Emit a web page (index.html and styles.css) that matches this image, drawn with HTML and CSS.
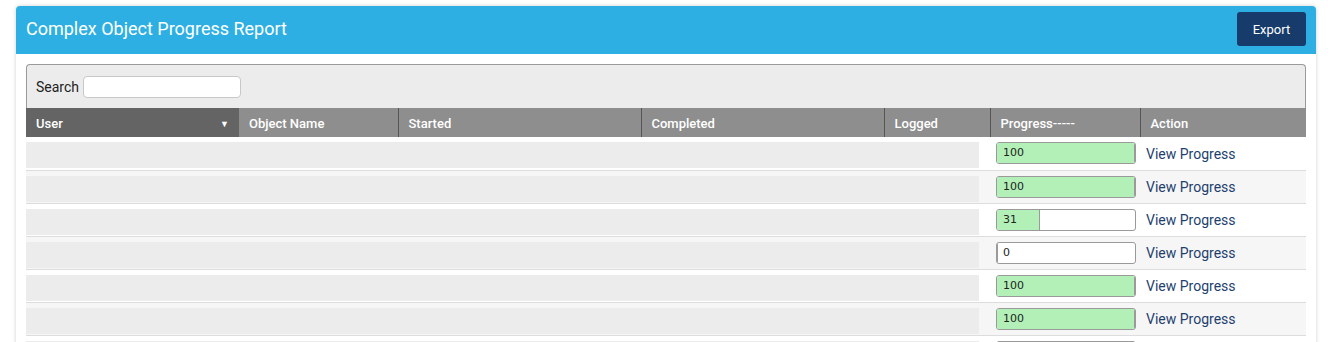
FILE: index.html
```html
<!DOCTYPE html>
<html lang="en">
<head>
<meta charset="utf-8">
<title>Complex Object Progress Report</title>
<link rel="stylesheet" href="styles.css">
</head>
<body>
<div class="panel">
  <div class="panel-head">
    <h1 class="panel-title">Complex Object Progress Report</h1>
    <button class="btn-export" type="button">Export</button>
  </div>
  <div class="panel-body">
    <div class="grid-wrap">
      <div class="toolbar">
        <label class="search-label">Search</label>
        <input class="search-input" type="text">
      </div>
      <table class="grid">
        <colgroup>
          <col class="c-user"><col class="c-obj"><col class="c-start"><col class="c-comp"><col class="c-log"><col class="c-prog"><col class="c-act">
        </colgroup>
        <thead>
          <tr>
            <th class="sorted"><span>User</span><span class="sort-arrow">&#9660;</span></th>
            <th>Object Name</th>
            <th>Started</th>
            <th>Completed</th>
            <th>Logged</th>
            <th>Progress-----</th>
            <th>Action</th>
          </tr>
        </thead>
        <tbody>
          <tr>
            <td colspan="5" class="skel-cell"><div class="skel"></div></td>
            <td class="prog-cell"><div class="bar"><div class="fill" style="width:100%"></div><span class="bar-label">100</span></div></td>
            <td class="act-cell"><a class="link" href="#">View Progress</a></td>
          </tr>
          <tr>
            <td colspan="5" class="skel-cell"><div class="skel"></div></td>
            <td class="prog-cell"><div class="bar"><div class="fill" style="width:100%"></div><span class="bar-label">100</span></div></td>
            <td class="act-cell"><a class="link" href="#">View Progress</a></td>
          </tr>
          <tr>
            <td colspan="5" class="skel-cell"><div class="skel"></div></td>
            <td class="prog-cell"><div class="bar"><div class="fill" style="width:31%"></div><span class="bar-label">31</span></div></td>
            <td class="act-cell"><a class="link" href="#">View Progress</a></td>
          </tr>
          <tr>
            <td colspan="5" class="skel-cell"><div class="skel"></div></td>
            <td class="prog-cell"><div class="bar"><div class="fill" style="width:0%"></div><span class="bar-label">0</span></div></td>
            <td class="act-cell"><a class="link" href="#">View Progress</a></td>
          </tr>
          <tr>
            <td colspan="5" class="skel-cell"><div class="skel"></div></td>
            <td class="prog-cell"><div class="bar"><div class="fill" style="width:100%"></div><span class="bar-label">100</span></div></td>
            <td class="act-cell"><a class="link" href="#">View Progress</a></td>
          </tr>
          <tr>
            <td colspan="5" class="skel-cell"><div class="skel"></div></td>
            <td class="prog-cell"><div class="bar"><div class="fill" style="width:100%"></div><span class="bar-label">100</span></div></td>
            <td class="act-cell"><a class="link" href="#">View Progress</a></td>
          </tr>
          <tr>
            <td colspan="5" class="skel-cell"><div class="skel"></div></td>
            <td class="prog-cell"><div class="bar"><div class="fill" style="width:100%"></div><span class="bar-label">100</span></div></td>
            <td class="act-cell"><a class="link" href="#">View Progress</a></td>
          </tr>
        </tbody>
      </table>
    </div>
  </div>
</div>
</body>
</html>
```
FILE: styles.css
```css
html, body {
  margin: 0;
  padding: 0;
  background: #ffffff;
  font-family: Roboto, "Liberation Sans", Arial, sans-serif;
  overflow: hidden;
}
body {
  padding: 6px 12px 0 16px;
}
.panel {
  width: 1300px;
  background: #ffffff;
  border-radius: 4px 4px 0 0;
  box-shadow: 0 0 4px rgba(0, 0, 0, 0.18);
}
.panel-head {
  height: 48px;
  background: #2eafe3;
  border-radius: 4px 4px 0 0;
  display: flex;
  align-items: center;
  justify-content: space-between;
  padding: 0 10px;
  box-sizing: border-box;
}
.panel-title {
  margin: 0;
  color: #ffffff;
  font-size: 18px;
  font-weight: 400;
  line-height: 1;
  padding-bottom: 2px;
}
.btn-export {
  width: 69px;
  height: 34px;
  background: #173b6a;
  color: #ffffff;
  border: none;
  border-radius: 3px;
  font-family: Roboto, "Liberation Sans", Arial, sans-serif;
  font-size: 13px;
  padding: 0;
  margin-top: -2px;
}
.panel-body {
  padding: 10px 10px 0 10px;
}
.grid-wrap {
  width: 1280px;
}
.toolbar {
  height: 44px;
  box-sizing: border-box;
  background: #ececec;
  border: 1px solid #9a9a9a;
  border-bottom: none;
  border-radius: 4px 4px 0 0;
  display: flex;
  align-items: center;
  padding: 0 0 0 9px;
  gap: 4px;
}
.search-label {
  font-size: 14px;
  color: #222222;
}
.search-input {
  width: 158px;
  height: 22px;
  box-sizing: border-box;
  border: 1px solid #c8c8c8;
  border-radius: 4px;
  background: #ffffff;
  margin: 0;
  padding: 0 4px;
}
.grid {
  width: 1280px;
  table-layout: fixed;
  border-collapse: collapse;
  border-spacing: 0;
}
.c-user { width: 213px; }
.c-obj { width: 159px; }
.c-start { width: 243px; }
.c-comp { width: 243px; }
.c-log { width: 106px; }
.c-prog { width: 150px; }
.c-act { width: 166px; }
.grid th {
  height: 29px;
  padding: 1px 0 0 10px;
  background: #8e8e8e;
  color: #ffffff;
  font-size: 13px;
  font-weight: 500;
  text-align: left;
  border-left: 1px solid #555555;
  box-sizing: border-box;
}
.grid th:first-child,
.grid th:nth-child(2) {
  border-left: none;
}
.grid th.sorted {
  background: #646464;
  padding-right: 10px;
}
.sort-arrow {
  float: right;
  font-size: 9px;
  margin-top: 3px;
}
.grid tbody tr {
  height: 33px;
}
.grid tbody tr:nth-child(even) {
  background: #f6f6f6;
}
.grid td {
  padding: 0;
  border-bottom: 1px solid #dddddd;
  vertical-align: top;
  box-sizing: border-box;
}
.skel-cell {
  padding: 5px 11px 0 0 !important;
}
.skel {
  height: 26px;
  background: #ececec;
}
.prog-cell {
  padding: 5px 0 0 6px !important;
}
.bar {
  position: relative;
  width: 140px;
  height: 22px;
  box-sizing: border-box;
  border: 1px solid #9a9a9a;
  border-radius: 3px;
  background: #ffffff;
  overflow: hidden;
}
.fill {
  height: 100%;
  background: #b3f0b7;
  box-sizing: border-box;
  border-right: 1px solid #9a9a9a;
}
.bar-label {
  position: absolute;
  left: 6px;
  top: 0;
  line-height: 20px;
  font-family: "DejaVu Sans", Verdana, sans-serif;
  font-size: 11px;
  color: #222222;
}
.act-cell {
  padding: 0 0 0 6px !important;
  vertical-align: middle !important;
}
.link {
  color: #1e3f6e;
  font-size: 14px;
  text-decoration: none;
}
```
